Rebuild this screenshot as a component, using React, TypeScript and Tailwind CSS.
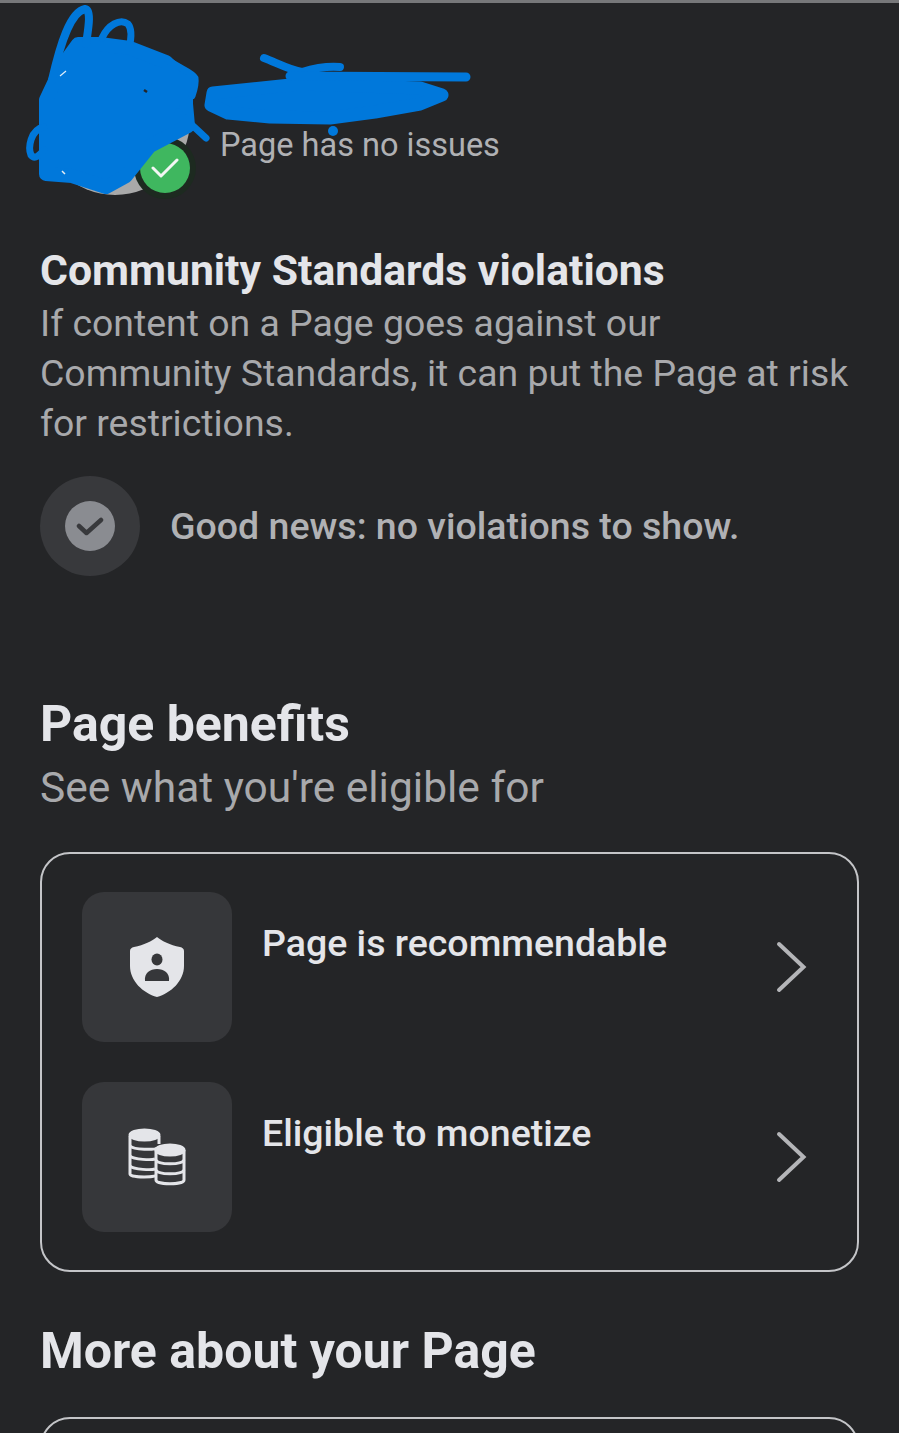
function Scribble() {
  return (
    <svg className="absolute left-0 top-0" width="520" height="210" viewBox="0 0 520 210" fill="none">
      <g stroke="#0078db" strokeLinecap="round" strokeLinejoin="round">
        <path
          fill="#0078db"
          strokeWidth="14"
          d="M46 174 L46 100 L62 66 L78 44 L100 44 L130 48 L166 62 L186 82 L186 104 L188 126 L150 146 L126 176 L106 187 L72 176 Z"
        />
        <path strokeWidth="8" d="M52 80 C60 45 70 12 85 9 C92 10 88 30 86 44" />
        <path strokeWidth="7" d="M102 38 C108 25 120 18 128 24 C133 30 131 40 129 48" />
        <path strokeWidth="7" d="M44 127 C30 130 28 148 31 155 C35 160 40 155 44 150" />
        <path strokeWidth="7" d="M178 112 L206 138" />
        <path strokeWidth="7" d="M168 60 C178 68 192 72 195 78 C196 84 194 90 192 96" />
        <path
          fill="#0078db"
          strokeWidth="13"
          d="M213 93 L211 105 L228 113 L270 117 L330 118 L375 112 L420 104 L442 95 L420 88 L300 84 Z"
        />
        <path strokeWidth="8" d="M264 58 C275 62 290 70 302 72 C315 68 328 66 340 67" />
        <path strokeWidth="9" d="M290 76 L466 77" />
      </g>
      <circle cx="333" cy="131" r="5" fill="#0078db" />
      <path d="M60 76 L66 71" stroke="#dfeefa" strokeWidth="1.2" />
      <path d="M144 90 L147 92" stroke="#242527" strokeWidth="2.5" />
      <path d="M62 171 L65 174" stroke="#e8eef2" strokeWidth="1.5" />
    </svg>
  );
}

function ShieldIcon() {
  return (
    <svg width="54" height="60" viewBox="0 0 54 60">
      <path
        fill="#e4e5e9"
        d="M27 0 C32 4 40 8 50 10 C52.5 10.5 54 12 54 14 L54 29 C54 44 41 56 27 60 C13 56 0 44 0 29 L0 14 C0 12 1.500 10.500 4 10 C14 8 22 4 27 0 Z"
      />
      <ellipse cx="27" cy="22.500" rx="5.500" ry="6" fill="#36373a" />
      <path fill="#36373a" d="M15 44 C14 36 20 32 27 32 C34 32 40 36 39 44 Z" />
    </svg>
  );
}

function CoinsIcon() {
  return (
    <svg width="58" height="58" viewBox="0 0 58 58" fill="none" stroke="#e4e5e9" strokeWidth="3">
      <path d="M2 8 V46 C2 50 30 50 31 46" />
      <path d="M31 8 V16" />
      <ellipse cx="16.500" cy="7" rx="14.500" ry="5" fill="#e4e5e9" />
      <path d="M2 18 C6 22 27 22 29 20 M2 28 C6 32 24 32 27 31 M2 38 C6 42 24 42 27 41" />
      <path d="M28 22 V52 C28 57 56 57 56 52 V22" fill="#36373a" />
      <ellipse cx="42" cy="22" rx="14" ry="5" fill="#e4e5e9" />
      <path d="M28 32 C30 37 54 37 56 32 M28 42 C30 47 54 47 56 42" />
    </svg>
  );
}

function Chevron() {
  return (
    <svg width="32" height="52" viewBox="0 0 32 52" fill="none">
      <path d="M4 3 L28.500 26 L4 49" stroke="#b4b5b8" strokeWidth="4" strokeLinecap="round" strokeLinejoin="miter" />
    </svg>
  );
}

function BenefitRow({ icon, label }: { icon: React.ReactNode; label: string }) {
  return (
    <div className="flex h-[150px]">
      <div className="flex h-[150px] w-[150px] shrink-0 items-center justify-center rounded-[22px] bg-[#36373a]">
        {icon}
      </div>
      <div className="ml-[30px] mt-[26px] text-[37.500px] font-medium leading-[50px] text-[#e4e5e9]">{label}</div>
      <div className="ml-auto mr-[50px] flex items-center">
        <Chevron />
      </div>
    </div>
  );
}

export default function App() {
  return (
    <div
      className="relative h-[1433px] w-[899px] overflow-hidden bg-[#242527]"
      style={{ fontFamily: 'Roboto, "Liberation Sans", sans-serif' }}
    >
      <div className="h-[3px] bg-[#77787a]" />

      <div className="px-10">
        {/* header */}
        <div className="mt-[42px] flex gap-[30px]">
          <div className="relative h-[150px] w-[150px] shrink-0 rounded-full bg-[#a9a9a9]">
            <div className="absolute left-[94px] top-[92px] flex h-[62px] w-[62px] items-center justify-center rounded-full bg-[#1d2a20]">
              <div className="flex h-[50px] w-[50px] items-center justify-center rounded-full bg-[#3fb75f]">
                <svg width="28" height="22" viewBox="0 0 28 22" fill="none">
                  <path d="M2 11 L10 19 L26 3" stroke="#f3f6f4" strokeWidth="3" strokeLinecap="round" strokeLinejoin="round" />
                </svg>
              </div>
            </div>
          </div>
          <div className="mt-[80px] text-[32.500px] leading-[40px] text-[#b0b1b4]">Page has no issues</div>
        </div>

        {/* violations */}
        <div className="mt-[50px] text-[42.700px] font-bold leading-[50px] text-[#e4e5e9]">Community Standards violations</div>
        <p className="mt-[3px] text-[37.400px] leading-[50px] text-[#a8a9ac]">
          If content on a Page goes against our
          <br />
          Community Standards, it can put the Page at risk
          <br />
          for restrictions.
        </p>

        <div className="mt-[28px] flex items-center gap-[30px]">
          <div className="flex h-[100px] w-[100px] items-center justify-center rounded-full bg-[#38393c]">
            <div className="flex h-[50px] w-[50px] items-center justify-center rounded-full bg-[#8a8c91]">
              <svg width="28" height="20" viewBox="0 0 28 20" fill="none">
                <path d="M3 10 L10.500 17 L25 4" stroke="#38393c" strokeWidth="4.500" strokeLinecap="round" strokeLinejoin="round" />
              </svg>
            </div>
          </div>
          <div className="text-[37.500px] font-medium leading-[50px] text-[#b0b1b4]">Good news: no violations to show.</div>
        </div>

        {/* benefits */}
        <h2 className="mt-[118px] text-[50px] font-bold leading-[60px] text-[#e4e5e9]">Page benefits</h2>
        <p className="mt-[4px] text-[42.500px] leading-[60px] text-[#a8a9ac]">See what you're eligible for</p>

        <div className="mt-[34px] flex flex-col gap-10 rounded-[30px] border-2 border-[#c4c5c8] pb-[38px] pl-10 pt-[38px]">
          <BenefitRow icon={<ShieldIcon />} label="Page is recommendable" />
          <BenefitRow icon={<CoinsIcon />} label="Eligible to monetize" />
        </div>

        <h2 className="mt-[49px] text-[50px] font-bold leading-[60px] text-[#e4e5e9]">More about your Page</h2>
        <div className="mt-[36px] h-[200px] rounded-[30px] border-2 border-[#c4c5c8]" />
      </div>

      <Scribble />
    </div>
  );
}
